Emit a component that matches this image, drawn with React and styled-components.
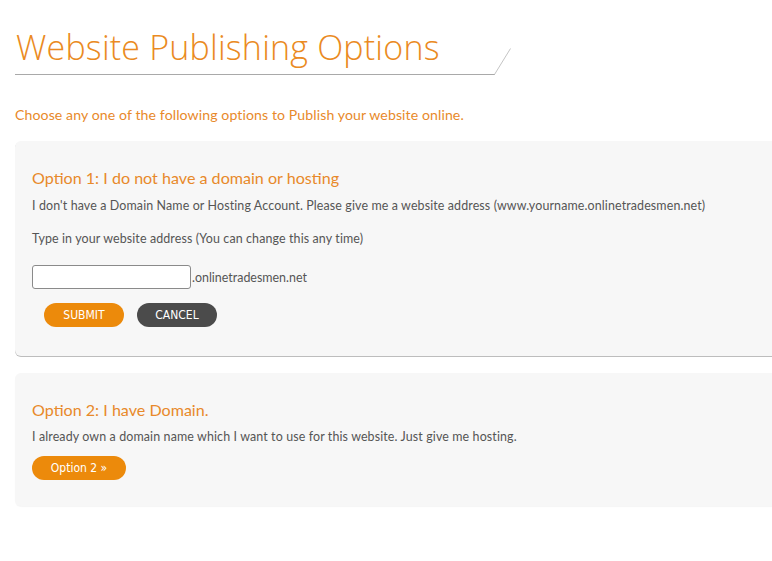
import React from 'react';
import styled, { createGlobalStyle } from 'styled-components';

const GlobalStyle = createGlobalStyle`
  html, body {
    margin: 0;
    padding: 0;
    background: #fff;
    overflow: hidden;
  }
  body {
    font-family: 'Lato', 'Open Sans', sans-serif;
  }
`;

const Page = styled.div`
  padding: 28px 0 0 15px;
  width: 790px;
`;

const TitleWrap = styled.div`
  position: relative;
  width: 480px;
  height: 46px;
  border-bottom: 1px solid #a9a9a9;
`;

const Slash = styled.svg`
  position: absolute;
  right: -16px;
  bottom: -1px;
`;

const Title = styled.h1`
  margin: 0 0 0 1px;
  font-family: 'Open Sans', sans-serif;
  font-weight: 300;
  font-size: 34px;
  line-height: 38px;
  color: #ea8a22;
  letter-spacing: 0.2px;
`;

const Intro = styled.p`
  margin: 31px 0 17px;
  font-family: 'Lato', sans-serif;
  font-size: 14.1px;
  line-height: 18px;
  color: #e8892a;
  letter-spacing: 0.1px;
`;

const Card = styled.section`
  background: #f7f7f7;
  border-radius: 6px 0 0 6px;
  padding: ${p => p.$top}px 17px ${p => p.$bottom}px;
  margin-bottom: 17px;
  box-shadow: ${p => (p.$line ? '0 1px 0 #bdbdbd' : '0 1px 1px rgba(0,0,0,0.04)')};
`;

const Heading = styled.h2`
  margin: 0 0 ${p => p.$gap}px;
  font-family: 'Lato', sans-serif;
  font-weight: 400;
  font-size: 16.1px;
  line-height: 20px;
  color: #e8892a;
`;

const Text = styled.p`
  margin: 0 0 ${p => p.$gap || 0}px;
  font-family: 'Lato', sans-serif;
  font-size: 12.45px;
  line-height: 16px;
  color: #555;
  letter-spacing: 0.12px;
`;

const InputRow = styled.div`
  display: flex;
  align-items: center;
  margin-top: 18px;
`;

const Input = styled.input`
  box-sizing: border-box;
  width: 159px;
  height: 24px;
  padding: 0;
  border: 1px solid #8a8a8a;
  border-radius: 3px;
  background: #fff;
`;

const Suffix = styled.span`
  margin-left: 1px;
  font-family: 'Lato', sans-serif;
  font-size: 12.45px;
  color: #555;
`;

const Buttons = styled.div`
  display: flex;
  gap: 13px;
  margin: 14px 0 0 12px;
`;

const Pill = styled.button`
  display: block;
  width: ${p => p.$w}px;
  height: 24px;
  padding: 0;
  border: none;
  border-radius: 12px;
  background: ${p => (p.$dark ? '#4b4b4b' : '#ec8a0b')};
  color: #fff;
  font-family: 'DejaVu Sans Condensed', 'DejaVu Sans', sans-serif;
  font-size: 12px;
  cursor: pointer;
`;

export default function App() {
  return (
    <Page>
      <GlobalStyle />
      <TitleWrap>
        <Title>Website Publishing Options</Title>
        <Slash width="17" height="27" viewBox="0 0 17 27">
          <line x1="0.5" y1="26.5" x2="16.5" y2="0.5" stroke="#c4c4c4" strokeWidth="1" />
        </Slash>
      </TitleWrap>
      <Intro>Choose any one of the following options to Publish your website online.</Intro>

      <Card $top={27} $bottom={29} $line>
        <Heading $gap={10}>Option 1: I do not have a domain or hosting</Heading>
        <Text $gap={17}>
          I don't have a Domain Name or Hosting Account. Please give me a website address (www.yourname.onlinetradesmen.net)
        </Text>
        <Text>Type in your website address (You can change this any time)</Text>
        <InputRow>
          <Input type="text" />
          <Suffix>.onlinetradesmen.net</Suffix>
        </InputRow>
        <Buttons>
          <Pill $w={80}>SUBMIT</Pill>
          <Pill $w={80} $dark>CANCEL</Pill>
        </Buttons>
      </Card>

      <Card $top={27} $bottom={26}>
        <Heading $gap={9}>Option 2: I have Domain.</Heading>
        <Text $gap={11}>I already own a domain name which I want to use for this website. Just give me hosting.</Text>
        <Pill $w={94}>Option 2 »</Pill>
      </Card>
    </Page>
  );
}
